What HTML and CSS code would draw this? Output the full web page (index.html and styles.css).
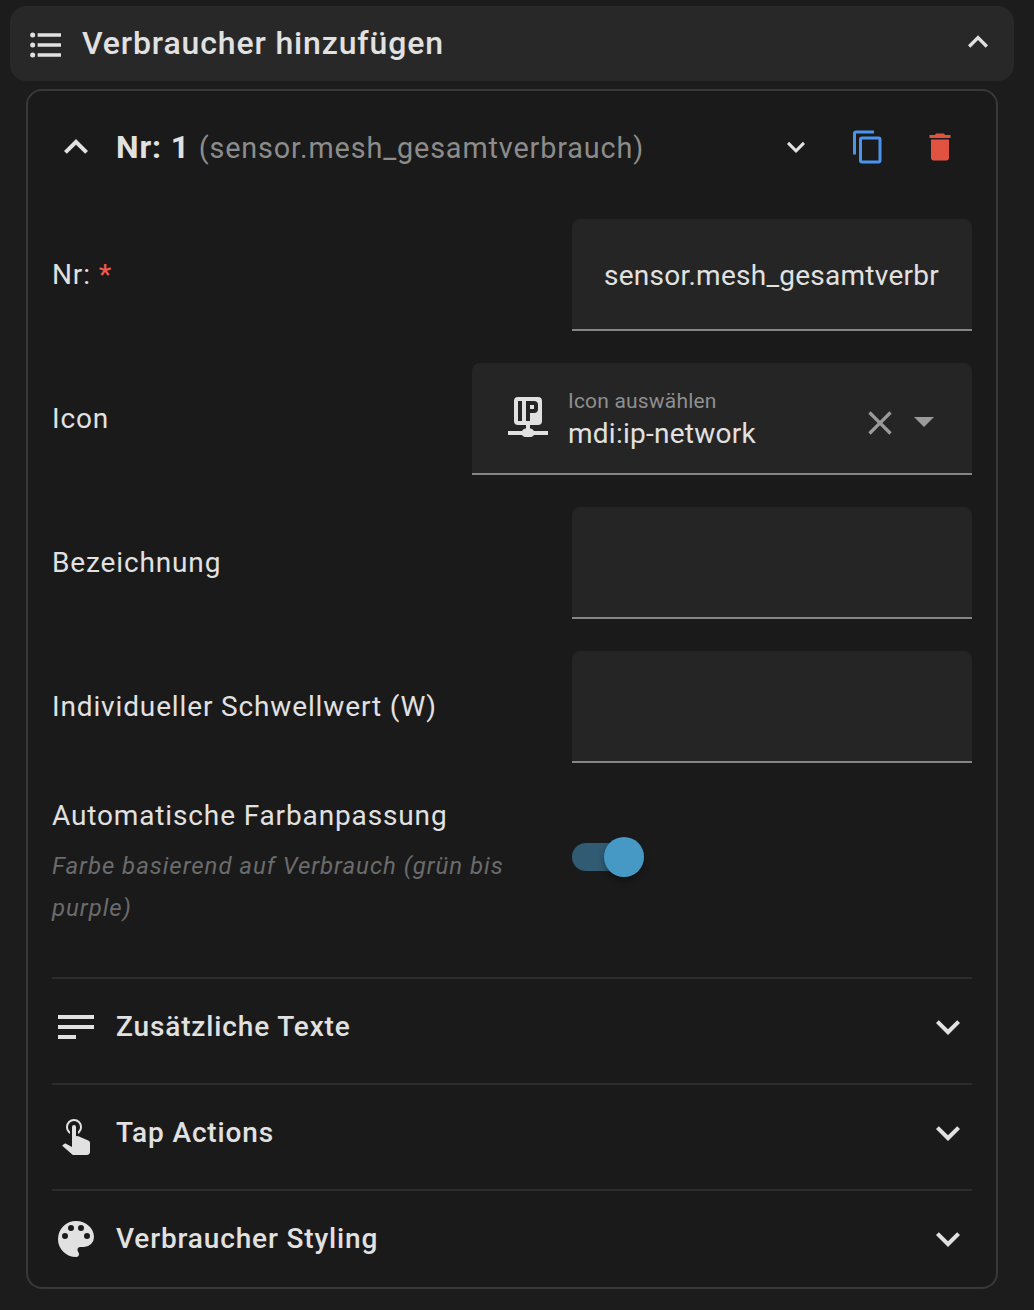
FILE: index.html
```html
<!DOCTYPE html>
<html lang="de">
<head>
<meta charset="utf-8">
<title>Verbraucher hinzufügen</title>
<link rel="stylesheet" href="styles.css">
</head>
<body>
<svg class="defs" aria-hidden="true">
  <symbol id="chevron-up" viewBox="0 0 24 24"><path d="M7.41,15.41L12,10.83L16.59,15.41L18,14L12,8L6,14L7.41,15.41Z"/></symbol>
  <symbol id="chevron-down" viewBox="0 0 24 24"><path d="M7.41,8.58L12,13.17L16.59,8.58L18,10L12,16L6,10L7.41,8.58Z"/></symbol>
</svg>
<main class="editor">
  <header class="panel-header">
    <svg class="icon icon-40 list-icon" viewBox="0 0 24 24"><path d="M7,5H21V7H7V5M7,13V11H21V13H7M4,4.5A1.5,1.5 0 0,1 5.5,6A1.5,1.5 0 0,1 4,7.5A1.5,1.5 0 0,1 2.5,6A1.5,1.5 0 0,1 4,4.5M4,10.5A1.5,1.5 0 0,1 5.5,12A1.5,1.5 0 0,1 4,13.5A1.5,1.5 0 0,1 2.5,12A1.5,1.5 0 0,1 4,10.5M7,19V17H21V19H7M4,16.5A1.5,1.5 0 0,1 5.5,18A1.5,1.5 0 0,1 4,19.5A1.5,1.5 0 0,1 2.5,18A1.5,1.5 0 0,1 4,16.5Z"/></svg>
    <h1 class="panel-title">Verbraucher hinzufügen</h1>
    <svg class="icon icon-40 panel-chevron"><use href="#chevron-up"/></svg>
  </header>

  <section class="card">
    <div class="item-header">
      <svg class="icon icon-48"><use href="#chevron-up"/></svg>
      <h2 class="item-title"><span class="item-name">Nr: 1</span> <span class="item-entity">(sensor.mesh_gesamtverbrauch)</span></h2>
      <div class="actions">
        <svg class="icon icon-36"><use href="#chevron-down"/></svg>
        <svg class="icon icon-36 copy" viewBox="0 0 24 24"><path d="M19,21H8V7H19M19,5H8A2,2 0 0,0 6,7V21A2,2 0 0,0 8,23H19A2,2 0 0,0 21,21V7A2,2 0 0,0 19,5M16,1H4A2,2 0 0,0 2,3V17H4V3H16V1Z"/></svg>
        <svg class="icon icon-36 delete" viewBox="0 0 24 24"><path d="M19,4H15.5L14.5,3H9.5L8.5,4H5V6H19M6,19A2,2 0 0,0 8,21H16A2,2 0 0,0 18,19V7H6V19Z"/></svg>
      </div>
    </div>

    <div class="fields">
      <div class="row">
        <div class="label">Nr: <span class="required">*</span></div>
        <div class="field text-field"><span class="field-text">sensor.mesh_gesamtverbr</span></div>
      </div>
      <div class="row">
        <div class="label">Icon</div>
        <div class="field picker">
          <svg class="icon icon-48 picker-icon" viewBox="0 0 24 24"><path fill-rule="evenodd" d="M17,3A2,2 0 0,1 19,5V15A2,2 0 0,1 17,17H13V18.7C14,18.8 14.7,19.3 15,20H22V22H15C14.5,22.8 13.8,23 13,23H11C10.2,23 9.5,22.8 9,22H2V20H9C9.3,19.3 10,18.8 11,18.7V17H7A2,2 0 0,1 5,15V5A2,2 0 0,1 7,3H17M7,5V15H9V5H7M11,5V15H13V11H15A2,2 0 0,0 17,9V7A2,2 0 0,0 15,5H11M13,7H15V9H13V7Z"/></svg>
          <div class="picker-text">
            <span class="picker-label">Icon auswählen</span>
            <span class="picker-value">mdi:ip-network</span>
          </div>
          <svg class="icon icon-40 muted" viewBox="0 0 24 24"><path d="M19,6.41L17.59,5L12,10.59L6.41,5L5,6.41L10.59,12L5,17.59L6.41,19L12,13.41L17.59,19L19,17.59L13.41,12L19,6.41Z"/></svg>
          <svg class="icon icon-48 muted arrow" viewBox="0 0 24 24"><path d="M7,10L12,15L17,10H7Z"/></svg>
        </div>
      </div>
      <div class="row">
        <div class="label">Bezeichnung</div>
        <div class="field text-field"></div>
      </div>
      <div class="row">
        <div class="label">Individueller Schwellwert (W)</div>
        <div class="field text-field"></div>
      </div>
      <div class="row switch-row">
        <div class="switch-label">
          <div class="label">Automatische Farbanpassung</div>
          <p class="hint">Farbe basierend auf Verbrauch (grün bis purple)</p>
        </div>
        <div class="switch"><span class="thumb"></span></div>
      </div>
    </div>

    <div class="section">
      <svg class="icon icon-48" viewBox="0 0 24 24"><path d="M3,6H21V8H3V6M3,11H21V13H3V11M3,16H12V18H3V16Z"/></svg>
      <h3 class="section-title">Zusätzliche Texte</h3>
      <svg class="icon icon-48"><use href="#chevron-down"/></svg>
    </div>
    <div class="section">
      <svg class="icon icon-48" viewBox="0 0 24 24"><path d="M10,9A1,1 0 0,1 11,8A1,1 0 0,1 12,9V13.47L13.21,13.6L18.15,15.79C18.68,16.03 19,16.56 19,17.14V21.5C18.97,22.32 18.32,22.97 17.5,23H11C10.62,23 10.26,22.85 10,22.57L5.1,18.37L5.84,17.6C6.03,17.39 6.3,17.28 6.58,17.28H6.8L10,19V9M11,5A4,4 0 0,1 15,9C15,10.5 14.2,11.77 13,12.46V11.24C13.61,10.69 14,9.89 14,9A3,3 0 0,0 11,6A3,3 0 0,0 8,9C8,9.89 8.39,10.69 9,11.24V12.46C7.8,11.77 7,10.5 7,9A4,4 0 0,1 11,5Z"/></svg>
      <h3 class="section-title">Tap Actions</h3>
      <svg class="icon icon-48"><use href="#chevron-down"/></svg>
    </div>
    <div class="section">
      <svg class="icon icon-48" viewBox="0 0 24 24"><path d="M17.5,12A1.5,1.5 0 0,1 16,10.5A1.5,1.5 0 0,1 17.5,9A1.5,1.5 0 0,1 19,10.5A1.5,1.5 0 0,1 17.5,12M14.5,8A1.5,1.5 0 0,1 13,6.5A1.5,1.5 0 0,1 14.5,5A1.5,1.5 0 0,1 16,6.5A1.5,1.5 0 0,1 14.5,8M9.5,8A1.5,1.5 0 0,1 8,6.5A1.5,1.5 0 0,1 9.5,5A1.5,1.5 0 0,1 11,6.5A1.5,1.5 0 0,1 9.5,8M6.5,12A1.5,1.5 0 0,1 5,10.5A1.5,1.5 0 0,1 6.5,9A1.5,1.5 0 0,1 8,10.5A1.5,1.5 0 0,1 6.5,12M12,3A9,9 0 0,0 3,12A9,9 0 0,0 12,21A1.5,1.5 0 0,0 13.5,19.5C13.5,19.11 13.35,18.76 13.11,18.5C12.88,18.23 12.73,17.88 12.73,17.5A1.5,1.5 0 0,1 14.23,16H16A5,5 0 0,0 21,11C21,6.58 16.97,3 12,3Z"/></svg>
      <h3 class="section-title">Verbraucher Styling</h3>
      <svg class="icon icon-48"><use href="#chevron-down"/></svg>
    </div>
  </section>
</main>
</body>
</html>
```
FILE: styles.css
```css
* { box-sizing: border-box; }

body {
  margin: 0;
  background: #1c1c1c;
  color: #e1e1e1;
  font-family: Roboto, "Liberation Sans", sans-serif;
  font-size: 28px;
}

h1, h2, h3, p { margin: 0; }

.defs { display: none; }

.editor {
  height: 1310px;
  padding: 6px 20px 0 10px;
}

.icon {
  display: block;
  flex: none;
  fill: currentColor;
}
.icon-36 { width: 36px; height: 36px; }
.icon-40 { width: 40px; height: 40px; }
.icon-48 { width: 48px; height: 48px; }

.panel-header {
  display: flex;
  align-items: center;
  height: 75px;
  padding: 0 16px;
  background: #282828;
  border-radius: 16px;
}
.list-icon { margin-top: 3px; }
.panel-chevron { margin-bottom: 3px; }
.panel-title {
  flex: 1;
  margin-left: 16px;
  padding-bottom: 2px;
  font-size: 32px;
  font-weight: 500;
  line-height: 48px;
  letter-spacing: 0.86px;
}

.card {
  width: 972px;
  height: 1200px;
  margin: 8px 0 0 16px;
  padding: 24px 24px 0;
  background: #1a1a1a;
  border: 2px solid #383838;
  border-radius: 16px;
}

.item-header {
  display: flex;
  align-items: center;
  height: 64px;
}
.item-title {
  flex: 1;
  margin-left: 16px;
  font-size: 32px;
  font-weight: 700;
  line-height: 48px;
  letter-spacing: 0.86px;
  white-space: nowrap;
}
.item-entity {
  color: #8c8c8c;
  font-size: 28.8px;
  font-weight: 400;
}
.actions {
  display: flex;
  gap: 36px;
  padding-right: 14px;
}
.copy { color: #4a94ee; }
.delete { color: #e25241; }

.fields {
  display: flex;
  flex-direction: column;
  gap: 32px;
  padding-top: 40px;
}
.row {
  display: flex;
  align-items: center;
  justify-content: space-between;
  height: 112px;
}
.label {
  line-height: 42px;
  letter-spacing: 0.86px;
}
.required {
  color: #ec5a50;
  font-weight: 500;
}

.field {
  display: flex;
  align-items: center;
  height: 112px;
  background: #252525;
  border-bottom: 2px solid #858585;
  border-radius: 8px 8px 0 0;
}
.text-field {
  width: 400px;
  padding: 4px 32px 0;
}
.field-text {
  overflow: hidden;
  line-height: 40px;
  letter-spacing: 0.25px;
  white-space: nowrap;
}
.picker {
  width: 500px;
  padding: 0 24px 0 32px;
}
.picker-icon { margin-bottom: 6px; }
.picker-text {
  display: flex;
  flex: 1;
  flex-direction: column;
  margin: 4px 0 0 16px;
}
.picker-label {
  color: #8f8f8f;
  font-size: 21px;
  line-height: 28px;
  letter-spacing: 0.19px;
}
.picker-value {
  line-height: 38px;
  letter-spacing: 0.25px;
}
.muted { color: #9b9b9b; margin-top: 10px; }
.arrow { margin-top: 6px; }

.switch-row {
  justify-content: flex-start;
  height: 134px;
}
.switch-label {
  width: 460px;
  margin-right: 60px;
}
.hint {
  margin-top: 8px;
  color: #6b6b6b;
  font-size: 24px;
  font-style: italic;
  line-height: 42px;
  letter-spacing: 0.96px;
}
.switch {
  display: flex;
  align-items: center;
  justify-content: flex-end;
  width: 72px;
  height: 28px;
  margin-bottom: 10px;
  background: #315b72;
  border-radius: 14px;
}
.thumb {
  width: 40px;
  height: 40px;
  background: #4698c5;
  border-radius: 50%;
  box-shadow: 0 4px 6px rgba(0, 0, 0, 0.3);
}

.section {
  display: flex;
  align-items: center;
  height: 106px;
  padding-bottom: 8px;
  border-top: 2px solid #2c2c2c;
}
.fields + .section { margin-top: 48px; }
.section-title {
  flex: 1;
  margin-left: 16px;
  font-size: 28px;
  font-weight: 500;
  line-height: 42px;
  letter-spacing: 0.86px;
}
```
